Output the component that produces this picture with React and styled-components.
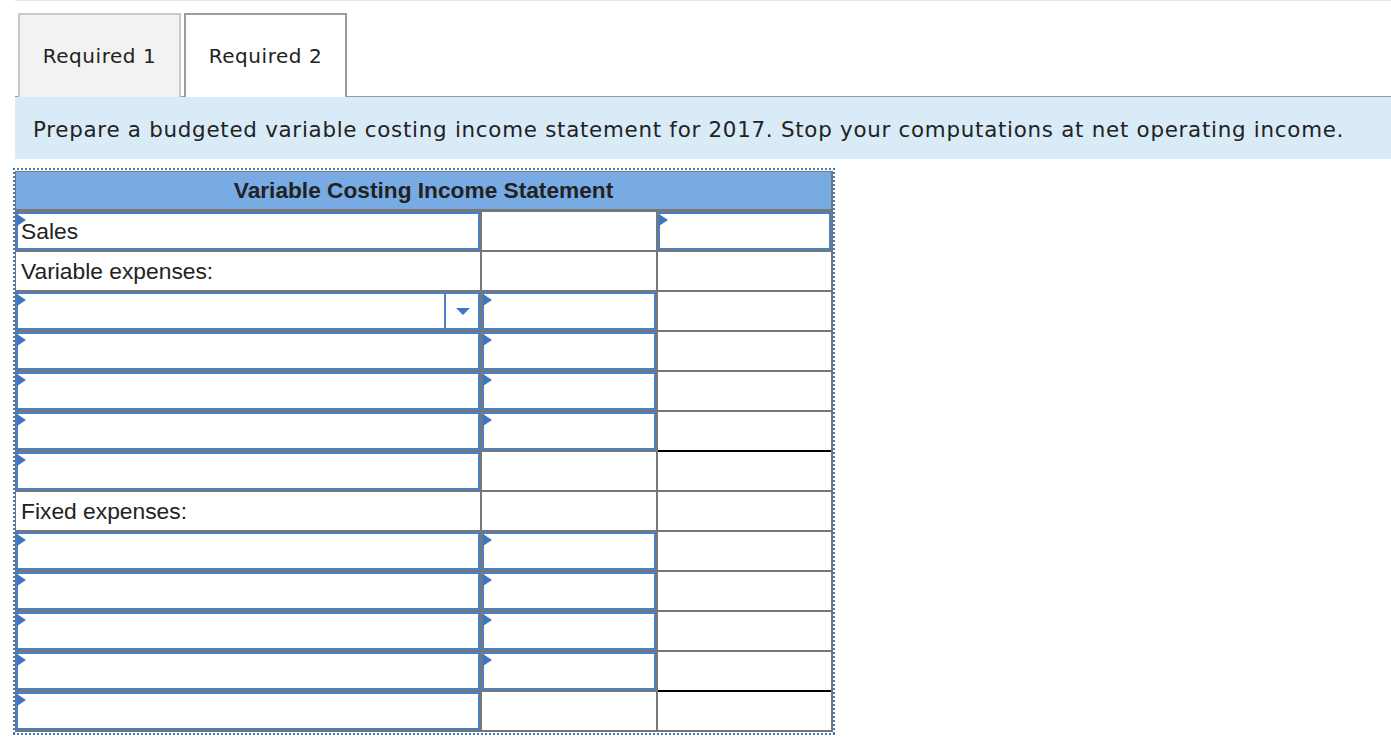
import styled, { createGlobalStyle } from 'styled-components'

/* GLOBAL */
const GlobalStyle = createGlobalStyle`
  body {
    margin: 0;
    background: #fff;
    color: #222;
  }
`

/* PAGE */
const Page = styled.div`
  margin-left: 15px;
  border-top: 1px solid #e3e3e3;
`

/* TABS */
const TabBar = styled.div`
  display: flex;
  gap: 3px;
  padding: 12px 0 0 3px;
  border-bottom: 1px solid #9a9a9a;
`

const Tab = styled.div`
  width: 159px;
  height: 82px;
  margin-bottom: -1px;
  display: flex;
  justify-content: center;
  align-items: center;
  border: 2px solid ${(p) => (p.$active ? '#9c9c9c' : '#c9c9c9')};
  border-bottom: none;
  background: ${(p) => (p.$active ? '#fff' : '#f2f2f2')};
  font-family: 'DejaVu Sans', Verdana, sans-serif;
  font-size: 20px;
  letter-spacing: 0.55px;
  color: #222;
`

/* INSTRUCTION */
const Instruction = styled.div`
  height: 62px;
  display: flex;
  align-items: center;
  padding: 2px 0 0 18px;
  box-sizing: border-box;
  background: #daebf8;
  font-family: 'DejaVu Sans', Verdana, sans-serif;
  font-size: 21.4px;
  letter-spacing: 0.73px;
  color: #222;
`

/* FRAME (dotted blue outline) */
const dot = '#3f7cc6'
const Frame = styled.div`
  width: 818px;
  margin: 9px 0 0 -2px;
  padding: 3px 2px 3px 2px;
  background:
    linear-gradient(to right, ${dot} 50%, transparent 50%) top left / 4px 2px repeat-x,
    linear-gradient(to right, ${dot} 50%, transparent 50%) bottom left / 4px 2px repeat-x,
    linear-gradient(to bottom, ${dot} 50%, transparent 50%) top left / 2px 4px repeat-y,
    linear-gradient(to bottom, ${dot} 50%, transparent 50%) top right / 2px 4px repeat-y;
`

/* GRID */
const Grid = styled.div`
  display: grid;
  grid-template-columns: 464px 174px 173px;
  grid-auto-rows: 38px;
  gap: 2px;
  padding: 1px 2px 2px 1px;
  background: #777;
`

const Header = styled.div`
  grid-column: 1 / 4;
  height: 37px;
  display: flex;
  justify-content: center;
  align-items: center;
  background: #78abe3;
  font-family: 'Liberation Sans', Arial, sans-serif;
  font-weight: bold;
  font-size: 22.7px;
  color: #222;
`

const Cell = styled.div`
  position: relative;
  box-sizing: border-box;
  display: flex;
  align-items: center;
  padding-left: ${(p) => (p.$input ? '3px' : '5px')};
  background: #fff;
  font-family: 'Liberation Sans', Arial, sans-serif;
  font-size: 22.8px;
  color: #222;
  border: ${(p) => (p.$input ? '2px solid #4a7fc2' : 'none')};
  box-shadow: ${(p) => (p.$total ? '0 2px 0 #000' : 'none')};
`

const Marker = styled.span`
  position: absolute;
  left: -1px;
  top: 0;
  width: 0;
  height: 0;
  border-left: 9px solid #3a76c3;
  border-top: 6px solid transparent;
  border-bottom: 6px solid transparent;
`

const Drop = styled.div`
  position: absolute;
  right: 0;
  top: 0;
  bottom: 0;
  width: 32px;
  display: flex;
  justify-content: center;
  align-items: center;
  border-left: 2px solid #4a7fc2;
`

const Arrow = styled.span`
  width: 0;
  height: 0;
  margin-left: 2px;
  border-top: 7px solid #3a76c3;
  border-left: 7px solid transparent;
  border-right: 7px solid transparent;
`

/* INPUT CELL */
function Input({ children, total, dropdown }) {
  return (
    <Cell $input $total={total}>
      <Marker />
      {children}
      {dropdown && (
        <Drop>
          <Arrow />
        </Drop>
      )}
    </Cell>
  )
}

/* ROWS */
const rows = [
  ['label', 'Sales'],
  ['text', 'Variable expenses:'],
  ['amount', null, 'dropdown'],
  ['amount'],
  ['amount'],
  ['amount', null, null, 'total'],
  ['result'],
  ['text', 'Fixed expenses:'],
  ['amount'],
  ['amount'],
  ['amount'],
  ['amount', null, null, 'total'],
  ['result'],
]

function App() {
  return (
    <>
      <GlobalStyle />
      <Page>
        {/* TABS */}
        <TabBar>
          <Tab>Required 1</Tab>
          <Tab $active>Required 2</Tab>
        </TabBar>

        {/* INSTRUCTION */}
        <Instruction>
          Prepare a budgeted variable costing income statement for 2017. Stop
          your computations at net operating income.
        </Instruction>

        {/* STATEMENT */}
        <Frame>
          <Grid>
            <Header>Variable Costing Income Statement</Header>
            {rows.map(([kind, label, drop, total], i) => {
              if (kind === 'label')
                return [
                  <Input key={i + 'a'}>{label}</Input>,
                  <Cell key={i + 'b'} />,
                  <Input key={i + 'c'} />,
                ]
              if (kind === 'text')
                return [
                  <Cell key={i + 'a'}>{label}</Cell>,
                  <Cell key={i + 'b'} />,
                  <Cell key={i + 'c'} />,
                ]
              if (kind === 'amount')
                return [
                  <Input key={i + 'a'} dropdown={drop} />,
                  <Input key={i + 'b'} />,
                  <Cell key={i + 'c'} $total={total} />,
                ]
              return [
                <Input key={i + 'a'} />,
                <Cell key={i + 'b'} />,
                <Cell key={i + 'c'} />,
              ]
            })}
          </Grid>
        </Frame>
      </Page>
    </>
  )
}

export default App
